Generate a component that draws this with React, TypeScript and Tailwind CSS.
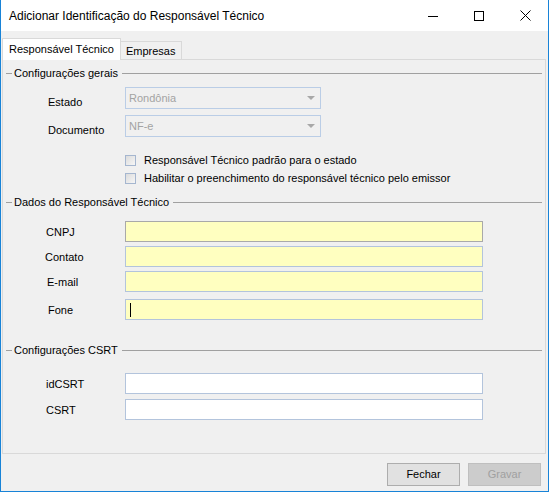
import React from 'react';

const font = { fontFamily: '"Liberation Sans", Arial, sans-serif' };

function GroupHeader({ title, className = '' }: { title: string; className?: string }) {
  return (
    <div className={`flex items-center h-[14px] pr-[3px] ${className}`}>
      <div className="w-[6px] ml-[3px] border-t border-[#a0a0a0]" />
      <span className="px-[2px] text-[11px] leading-[14px] text-black whitespace-nowrap">{title}</span>
      <div className="flex-1 ml-[2px] border-t border-[#a0a0a0]" />
    </div>
  );
}

function ComboRow({ label, value, className = '' }: { label: string; value: string; className?: string }) {
  return (
    <div className={`flex items-end ${className}`}>
      <div className="w-[122px] pl-[45px] text-[11px] leading-[14px] text-black">{label}</div>
      <div className="w-[196px] h-[22px] border border-[#bacde6] bg-[#f0f0f0] flex items-center justify-between px-[3px]">
        <span className="text-[11px] text-[#a3a3a3]">{value}</span>
        <svg width="8" height="4" viewBox="0 0 8 4" className="mr-[2px]">
          <path d="M0 0h8L4 4z" fill="#a8a8a8" />
        </svg>
      </div>
    </div>
  );
}

function InputRow({
  label,
  yellow,
  labelPad = 45,
  caret,
  className = '',
}: {
  label: string;
  yellow?: boolean;
  labelPad?: number;
  caret?: boolean;
  className?: string;
}) {
  const pads: Record<number, string> = {
    42: 'pl-[42px]',
    43: 'pl-[43px]',
    44: 'pl-[44px]',
    45: 'pl-[45px]',
  };
  return (
    <div className={`flex items-center ${className}`}>
      <div className={`w-[122px] ${pads[labelPad]} pt-[2px] text-[11px] text-black`}>{label}</div>
      <div
        className={`w-[358px] h-[21px] border flex items-center pl-[4px] ${
          yellow ? 'bg-[#ffffc0]' : 'bg-white'
        } ${label === 'CNPJ' ? 'border-[#a9a9a9]' : 'border-[#b3c4dc]'}`}
      >
        {caret && <div className="w-px h-[14px] bg-black" />}
      </div>
    </div>
  );
}

function Checkbox({ label, className = '' }: { label: string; className?: string }) {
  return (
    <div className={`flex items-center h-[18px] pl-[122px] ${className}`}>
      <div className="w-[11px] h-[11px] border border-[#a5b6cf] bg-gradient-to-br from-[#dcdcdc] to-[#f6f6f6]" />
      <span className="ml-[8px] text-[11px] text-black">{label}</span>
    </div>
  );
}

export default function App() {
  return (
    <div className="w-[549px] h-[493px] bg-white" style={font}>
      <div className="w-[549px] h-[492px] border-x border-b border-[#1883d7] bg-[#f0f0f0] flex flex-col">
        {/* title bar */}
        <div className="h-[31px] bg-white flex items-center justify-between">
          <span className="ml-[8px] text-[12px] text-black">Adicionar Identificação do Responsável Técnico</span>
          <div className="flex items-center h-full">
            <div className="w-[46px] h-full flex items-center justify-center">
              <svg width="10" height="10" viewBox="0 0 10 10">
                <path d="M0 5.5h10" stroke="#000" strokeWidth="1" />
              </svg>
            </div>
            <div className="w-[46px] h-full flex items-center justify-center">
              <svg width="10" height="10" viewBox="0 0 10 10">
                <rect x="0.5" y="0.5" width="9" height="9" fill="none" stroke="#000" strokeWidth="1" />
              </svg>
            </div>
            <div className="w-[46px] h-full flex items-center justify-center">
              <svg width="11" height="11" viewBox="0 0 11 11">
                <path d="M0.5 0.5l10 10M10.5 0.5l-10 10" stroke="#000" strokeWidth="1" />
              </svg>
            </div>
          </div>
        </div>

        {/* tabs */}
        <div className="mt-[7px] pl-[1px] flex items-end h-[21px] relative z-10">
          <div className="h-[22px] -mb-px px-[6px] bg-white border-x border-t border-[#d9d9d9] flex items-center text-[11px] text-black">
            Responsável Técnico
          </div>
          <div className="h-[18px] px-[5px] border-r border-t border-[#d9d9d9] flex items-center text-[11px] text-black pt-[2px]">
            Empresas
          </div>
        </div>

        {/* tab page */}
        <div className="ml-[1px] mr-[2px] h-[395px] border border-[#d9d9d9] bg-[#f0f0f0] flex flex-col">
          <GroupHeader title="Configurações gerais" className="mt-[6px]" />
          <ComboRow label="Estado" value="Rondônia" className="mt-[7px]" />
          <ComboRow label="Documento" value="NF-e" className="mt-[6px]" />
          <Checkbox label="Responsável Técnico padrão para o estado" className="mt-[14px]" />
          <Checkbox label="Habilitar o preenchimento do responsável técnico pelo emissor" />

          <GroupHeader title="Dados do Responsável Técnico" className="mt-[8px]" />
          <InputRow label="CNPJ" yellow labelPad={43} className="mt-[12px]" />
          <InputRow label="Contato" yellow labelPad={42} className="mt-[4px]" />
          <InputRow label="E-mail" yellow labelPad={44} className="mt-[4px]" />
          <InputRow label="Fone" yellow caret labelPad={45} className="mt-[7px]" />

          <GroupHeader title="Configurações CSRT" className="mt-[23px]" />
          <InputRow label="idCSRT" labelPad={43} className="mt-[16px]" />
          <InputRow label="CSRT" labelPad={43} className="mt-[5px]" />
        </div>

        {/* buttons */}
        <div className="flex justify-end gap-[8px] mt-[9px] mr-[7px]">
          <button className="w-[73px] h-[23px] bg-[#e1e1e1] border border-[#adadad] text-[11px] text-black">
            Fechar
          </button>
          <button className="w-[73px] h-[23px] bg-[#cccccc] border border-[#bfbfbf] text-[11px] text-[#a0a0a0]" disabled>
            Gravar
          </button>
        </div>
      </div>
    </div>
  );
}
